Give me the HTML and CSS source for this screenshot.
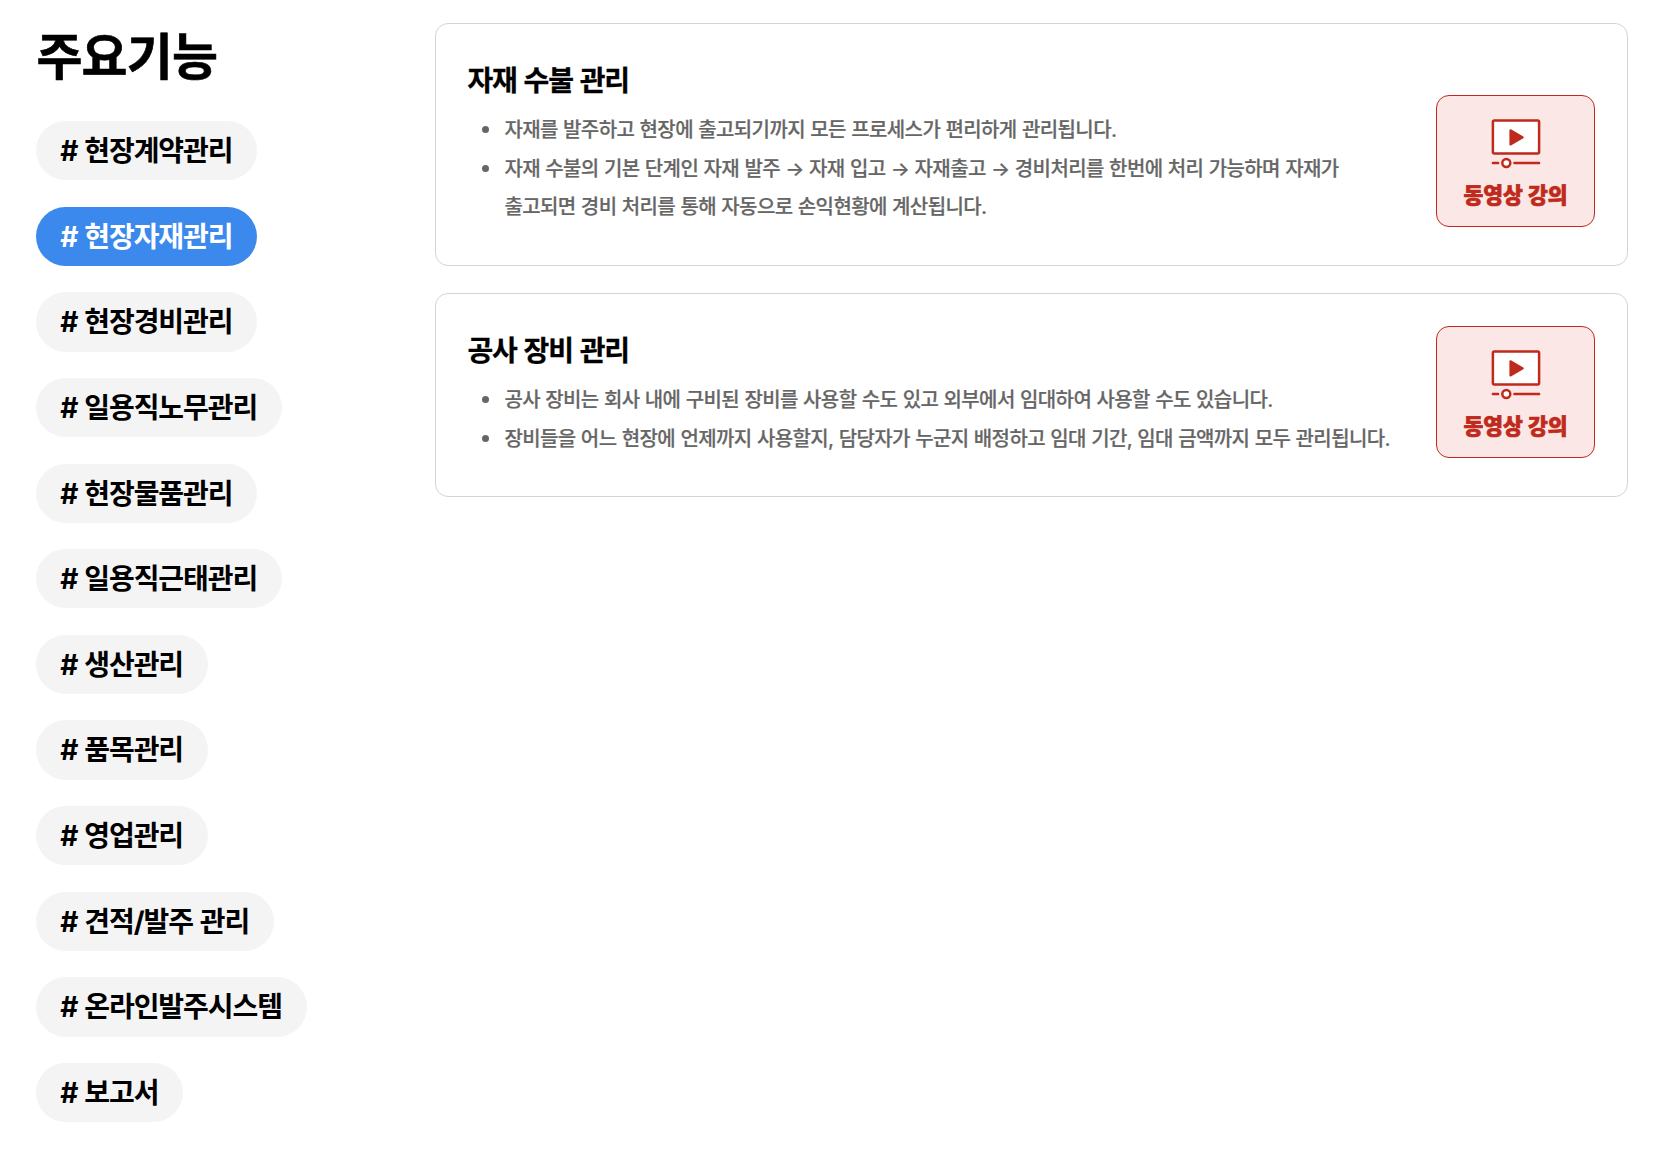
FILE: index.html
```html
<!DOCTYPE html>
<html lang="ko">
<head>
    <meta charset="UTF-8">
    <title>주요기능</title>
    <link rel="stylesheet" href="styles.css">
</head>
<body>
    <div class="features">
        <aside class="side">
            <h1>주요기능</h1>
            <ul class="tag-list">
                <li class="tag"># 현장계약관리</li>
                <li class="tag active"># 현장자재관리</li>
                <li class="tag"># 현장경비관리</li>
                <li class="tag"># 일용직노무관리</li>
                <li class="tag"># 현장물품관리</li>
                <li class="tag"># 일용직근태관리</li>
                <li class="tag"># 생산관리</li>
                <li class="tag"># 품목관리</li>
                <li class="tag"># 영업관리</li>
                <li class="tag"># 견적/발주 관리</li>
                <li class="tag"># 온라인발주시스템</li>
                <li class="tag"># 보고서</li>
            </ul>
        </aside>

        <main class="cards">
            <section class="card">
                <div class="card-text">
                    <h2>자재 수불 관리</h2>
                    <ul>
                        <li>자재를 발주하고 현장에 출고되기까지 모든 프로세스가 편리하게 관리됩니다.</li>
                        <li>자재 수불의 기본 단계인 자재 발주 → 자재 입고 → 자재출고 → 경비처리를 한번에 처리 가능하며 자재가<br>출고되면 경비 처리를 통해 자동으로 손익현황에 계산됩니다.</li>
                    </ul>
                </div>
                <div class="video-btn">
                    <svg class="video-icon" width="50" height="50" viewBox="0 0 50 50" fill="none" stroke="#bf2a1c" stroke-width="2.5" stroke-linecap="round" stroke-linejoin="round">
                        <rect x="1.9" y="1.6" width="46.2" height="33" rx="1.5" fill="#fff"/>
                        <path d="M19.4 11.2v14.4l12.4-7.2z" fill="#bf2a1c" stroke-width="2"/>
                        <path d="M1.9 44h5.2M23.4 44h24.7"/>
                        <circle cx="15.3" cy="44" r="4" fill="#fff"/>
                    </svg>
                    <span>동영상 강의</span>
                </div>
            </section>

            <section class="card">
                <div class="card-text">
                    <h2>공사 장비 관리</h2>
                    <ul>
                        <li>공사 장비는 회사 내에 구비된 장비를 사용할 수도 있고 외부에서 임대하여 사용할 수도 있습니다.</li>
                        <li>장비들을 어느 현장에 언제까지 사용할지, 담당자가 누군지 배정하고 임대 기간, 임대 금액까지 모두 관리됩니다.</li>
                    </ul>
                </div>
                <div class="video-btn">
                    <svg class="video-icon" width="50" height="50" viewBox="0 0 50 50" fill="none" stroke="#bf2a1c" stroke-width="2.5" stroke-linecap="round" stroke-linejoin="round">
                        <rect x="1.9" y="1.6" width="46.2" height="33" rx="1.5" fill="#fff"/>
                        <path d="M19.4 11.2v14.4l12.4-7.2z" fill="#bf2a1c" stroke-width="2"/>
                        <path d="M1.9 44h5.2M23.4 44h24.7"/>
                        <circle cx="15.3" cy="44" r="4" fill="#fff"/>
                    </svg>
                    <span>동영상 강의</span>
                </div>
            </section>
        </main>
    </div>
</body>
</html>
```
FILE: styles.css
```css
* {
    box-sizing: border-box;
    margin: 0;
    padding: 0;
}
body {
    background: #fff;
    color: #000;
    font-family: Inter, "Noto Sans CJK KR", sans-serif;
}
.features {
    display: flex;
    padding: 23.4px 32px 0 36.4px;
}
.side {
    width: 398.6px;
    flex-shrink: 0;
}
h1 {
    font-size: 50px;
    font-weight: 700;
    line-height: 68px;
    letter-spacing: -0.8px;
    margin-bottom: 29.6px;
    -webkit-text-stroke: 0.6px #000;
}
.tag-list {
    display: flex;
    flex-direction: column;
    align-items: flex-start;
    gap: 26.4px;
    list-style: none;
}
.tag {
    height: 59.25px;
    padding: 0 24.6px 0 23.8px;
    border-radius: 30px;
    background: #f4f4f4;
    font-size: 28px;
    font-weight: 700;
    line-height: 60px;
    letter-spacing: -1.04px;
    word-spacing: 1.3px;
    white-space: nowrap;
}
.tag.active {
    background: #3c89ee;
    color: #fff;
}
.cards {
    flex: 1;
    display: flex;
    flex-direction: column;
    gap: 27.2px;
}
.card {
    display: flex;
    justify-content: space-between;
    align-items: flex-end;
    padding: 32px 32px 38px 31.4px;
    border: 1px solid #d4d4d4;
    border-radius: 13px;
}
.card-text h2 {
    font-size: 28px;
    font-weight: 700;
    line-height: 50px;
    letter-spacing: -1.1px;
    word-spacing: 1.3px;
    margin-bottom: 5px;
    -webkit-text-stroke: 0.3px #000;
}
.card-text ul {
    padding-left: 37px;
    list-style: none;
}
.card-text li {
    color: #666;
    font-size: 20px;
    font-weight: 500;
    line-height: 38.5px;
    letter-spacing: -0.6px;
    word-spacing: 0.55px;
    white-space: nowrap;
    -webkit-text-stroke: 0.2px #666;
}
.card-text li::before {
    content: "";
    display: inline-block;
    width: 7px;
    height: 7px;
    margin: 0 15.2px 0 -22.2px;
    border-radius: 50%;
    background: #666;
    vertical-align: 4px;
}
.video-btn {
    display: flex;
    flex-direction: column;
    align-items: center;
    flex-shrink: 0;
    width: 159px;
    height: 132px;
    padding-top: 23px;
    border: 1px solid #bf2a1c;
    border-radius: 13px;
    background: #fbe7e6;
}
.video-btn span {
    margin-top: 11px;
    color: #bf2a1c;
    font-size: 21.5px;
    font-weight: 900;
    line-height: 30px;
    word-spacing: 1px;
    -webkit-text-stroke: 0.7px #bf2a1c;
}
```
